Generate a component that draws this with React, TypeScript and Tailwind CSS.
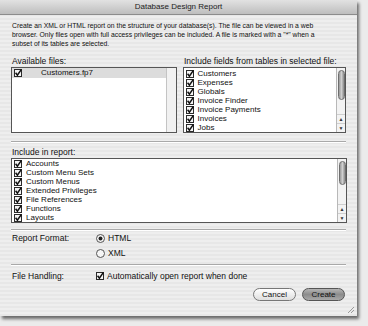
import React from "react";

const font = { fontFamily: '"Liberation Sans", Arial, sans-serif' };

function Check() {
    return (
        <svg width="8" height="8" viewBox="0 0 8 8" className="shrink-0">
            <rect x="0.5" y="0.5" width="7" height="7" fill="#f4f4f4" stroke="#2a2a2a" />
            <path d="M1.6 3.8 L3.4 6.2 L7.4 0.4" fill="none" stroke="#111" strokeWidth="1.5" />
        </svg>
    );
}

function Radio({ on }: { on?: boolean }) {
    return (
        <svg width="9" height="9" viewBox="0 0 9 9" className="shrink-0">
            <circle cx="4.5" cy="4.5" r="4" fill="#f6f6f6" stroke="#555" />
            {on && <circle cx="4.5" cy="4.5" r="2" fill="#222" />}
        </svg>
    );
}

function Scrollbar({ thumb }: { thumb: number }) {
    return (
        <div className="w-[9px] border-l border-[#b8b8b8] bg-[#f3f3f3] flex flex-col items-center">
            <div
                className="w-[7px] mt-[2px] rounded-full border border-[#6e6e6e] bg-gradient-to-r from-[#9a9a9a] via-[#cfcfcf] to-[#8a8a8a]"
                style={{ height: thumb }}
            />
            <div className="flex-1" />
            <div className="text-[5px] leading-[8px] text-[#333] text-center w-full border-t border-[#cfcfcf]">▲</div>
            <div className="text-[5px] leading-[8px] text-[#333] text-center w-full border-t border-[#cfcfcf]">▼</div>
        </div>
    );
}

function Row({ label }: { label: string }) {
    return (
        <div className="h-[9px] flex items-center gap-[4px] pl-[2px]">
            <Check />
            <span className="leading-[9px]">{label}</span>
        </div>
    );
}

const tables = ["Customers", "Expenses", "Globals", "Invoice Finder", "Invoice Payments", "Invoices", "Jobs"];
const report = [
    "Accounts",
    "Custom Menu Sets",
    "Custom Menus",
    "Extended Privileges",
    "File References",
    "Functions",
    "Layouts",
];

export default function App() {
    return (
        <div className="w-[368px] h-[326px] overflow-hidden bg-[#ebebeb] text-[#111] text-[8px]" style={font}>
            <div className="w-[357px] h-[316px] flex flex-col shadow-[2px_3px_3px_rgba(0,0,0,0.55)] bg-[repeating-linear-gradient(180deg,#eeeeee_0px,#eeeeee_2px,#e7e7e7_2px,#e7e7e7_4px)]">
                {/* title bar */}
                <div className="h-[15px] shrink-0 flex items-center justify-center border-b border-[#8c8c8c] bg-gradient-to-b from-[#e2e2e2] to-[#bebebe] text-[8px] text-[#222]">
                    Database Design Report
                </div>

                <div className="px-[11px] flex flex-col">
                    <p className="mt-[6px] text-[6.8px] leading-[9px] whitespace-nowrap pl-[1px]">
                        Create an XML or HTML report on the structure of your database(s). The file can be viewed in a web
                        <br />
                        browser. Only files open with full access privileges can be included. A file is marked with a "*" when a
                        <br />
                        subset of its tables are selected.
                    </p>

                    <div className="mt-[8px] flex gap-[6px] text-[8.5px] leading-[10px]">
                        <div className="w-[166px] pl-[1px]">Available files:</div>
                        <div className="pl-[1px]">Include fields from tables in selected file:</div>
                    </div>

                    <div className="mt-[1px] flex gap-[6px]">
                        <div className="w-[166px] h-[66px] border border-[#555] bg-white flex">
                            <div className="flex-1">
                                <div className="h-[10px] bg-[#dcdcdc] flex items-center pl-[2px]">
                                    <Check />
                                    <span className="ml-[19px]">Customers.fp7</span>
                                </div>
                            </div>
                            <div className="w-[10px] border-l border-[#c4c4c4] bg-[#f1f1f1]" />
                        </div>
                        <div className="w-[164px] h-[66px] border border-[#555] bg-white flex">
                            <div className="flex-1 pt-[1px]">
                                {tables.map((t) => (
                                    <Row key={t} label={t} />
                                ))}
                            </div>
                            <Scrollbar thumb={30} />
                        </div>
                    </div>

                    <div className="mt-[8px] h-[2px] border-t border-[#a9a9a9] border-b-white border-b" />

                    <div className="mt-[4px] text-[8.5px] leading-[10px] pl-[1px]">Include in report:</div>

                    <div className="mt-[1px] w-[336px] h-[65px] border border-[#555] bg-white flex overflow-hidden">
                        <div className="flex-1">
                            {report.map((t) => (
                                <Row key={t} label={t} />
                            ))}
                        </div>
                        <Scrollbar thumb={24} />
                    </div>

                    <div className="mt-[6px] h-[2px] border-t border-[#a9a9a9] border-b-white border-b" />

                    <div className="mt-[2px] flex items-center text-[8.5px] leading-[10px]">
                        <div className="w-[85px] pl-[1px]">Report Format:</div>
                        <div className="flex items-center gap-[3px]">
                            <Radio on />
                            <span>HTML</span>
                        </div>
                    </div>
                    <div className="mt-[5px] flex items-center text-[8.5px] leading-[10px]">
                        <div className="w-[85px]" />
                        <div className="flex items-center gap-[3px]">
                            <Radio />
                            <span>XML</span>
                        </div>
                    </div>

                    <div className="mt-[6px] h-[2px] border-t border-[#a9a9a9] border-b-white border-b" />

                    <div className="mt-[5px] flex items-center text-[8.5px] leading-[10px]">
                        <div className="w-[85px] pl-[1px]">File Handling:</div>
                        <div className="flex items-center gap-[3px]">
                            <Check />
                            <span>Automatically open report when done</span>
                        </div>
                    </div>

                    <div className="mt-[7px] flex justify-end gap-[6px] pr-[1px] text-[8px]">
                        <div className="w-[43px] h-[13px] rounded-full border border-[#777] bg-gradient-to-b from-white to-[#dedede] flex items-center justify-center">
                            Cancel
                        </div>
                        <div className="w-[43px] h-[13px] rounded-full border border-[#555] bg-gradient-to-b from-[#b4b4b4] via-[#8c8c8c] to-[#a8a8a8] flex items-center justify-center text-[#111]">
                            Create
                        </div>
                    </div>
                </div>

                <div className="flex-1 flex items-end justify-end pr-[2px] pb-[2px]">
                    <svg width="9" height="9" viewBox="0 0 9 9">
                        <path d="M8 2 L2 8 M8 5 L5 8" stroke="#999" strokeWidth="1" />
                    </svg>
                </div>
            </div>
        </div>
    );
}
